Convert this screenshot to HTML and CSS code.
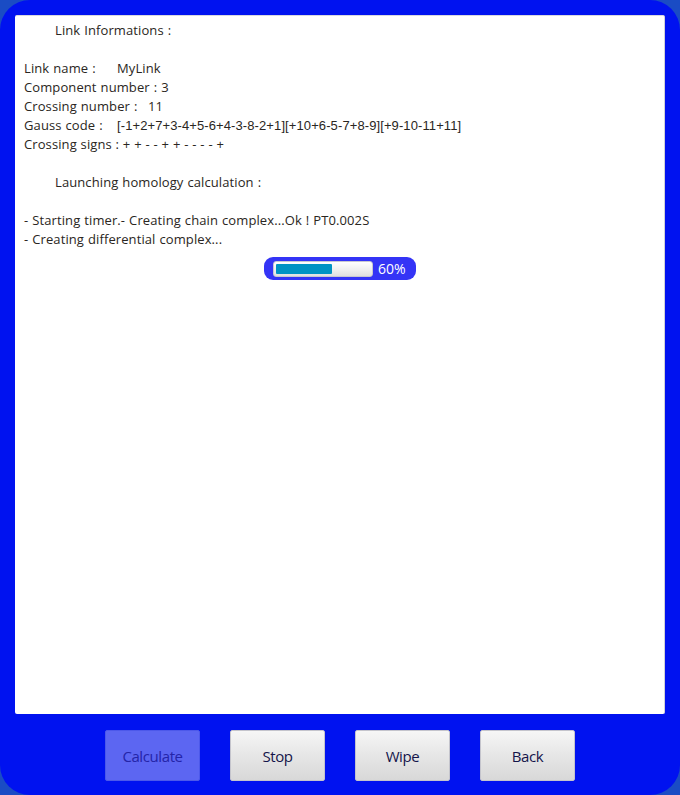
FILE: index.html
```html
<!DOCTYPE html>
<html>
<head>
<meta charset="utf-8">
<link rel="stylesheet" href="styles.css">
</head>
<body>
<div class="window">
  <div class="panel">
    <div class="line indent">Link Informations :</div>
    <div class="line"></div>
    <div class="line"><span class="lbl w93">Link name :</span>MyLink</div>
    <div class="line">Component number : 3</div>
    <div class="line"><span class="lbl w124">Crossing number :</span>11</div>
    <div class="line"><span class="lbl w93">Gauss code :</span><span class="code">[-1+2+7+3-4+5-6+4-3-8-2+1][+10+6-5-7+8-9][+9-10-11+11]</span></div>
    <div class="line signs">Crossing signs : + + - - + + - - - - +</div>
    <div class="line"></div>
    <div class="line indent">Launching homology calculation :</div>
    <div class="line"></div>
    <div class="line">- Starting timer.- Creating chain complex...Ok ! PT0.002S</div>
    <div class="line">- Creating differential complex...</div>
    <div class="progress-row">
      <div class="progress">
        <div class="track"><div class="fill" style="width:60%"></div></div>
        <span class="pct">60%</span>
      </div>
    </div>
  </div>
  <div class="buttons">
    <button class="btn disabled">Calculate</button>
    <button class="btn">Stop</button>
    <button class="btn">Wipe</button>
    <button class="btn">Back</button>
  </div>
</div>
</body>
</html>
```
FILE: styles.css
```css
html, body {
  margin: 0;
  padding: 0;
  width: 680px;
  height: 795px;
  background: #1a4cc4;
  overflow: hidden;
}
.window {
  width: 680px;
  height: 795px;
  box-sizing: border-box;
  background: #0012f0;
  border-radius: 30px;
  padding: 15px 15px 0 15px;
  display: flex;
  flex-direction: column;
}
.panel {
  height: 699px;
  box-sizing: border-box;
  background: #ffffff;
  border-top: 1px solid #d8d8e0;
  border-right: 1px solid #d0d0d8;
  border-radius: 2px;
  padding: 5px 9px 0 9px;
  font-family: "Open Sans", "DejaVu Sans", sans-serif;
  font-size: 13px;
  letter-spacing: 0.1px;
  word-spacing: 0.5px;
  color: #2a2622;
}
.line {
  height: 19px;
  line-height: 19px;
  white-space: nowrap;
}
.signs {
  word-spacing: 0.3px;
}
.indent {
  padding-left: 31px;
}
.lbl {
  display: inline-block;
}
.w93 { width: 93px; }
.w124 { width: 124px; }
.code {
  font-family: "Liberation Sans", sans-serif;
  font-size: 13px;
  letter-spacing: 0.1px;
}
.progress-row {
  display: flex;
  justify-content: center;
  padding-top: 8px;
}
.progress {
  width: 152px;
  height: 23px;
  box-sizing: border-box;
  background: #3434f6;
  border-radius: 9px;
  display: flex;
  align-items: center;
  padding-left: 9px;
  gap: 5px;
  margin-left: 1px;
  letter-spacing: 0;
  word-spacing: 0;
}
.track {
  width: 100px;
  height: 16px;
  box-sizing: border-box;
  background: linear-gradient(#ffffff, #eeeeee 60%, #e0e0e0);
  border: 1px solid #c8c8d0;
  border-radius: 3px;
  padding: 2px;
  display: flex;
}
.fill {
  height: 100%;
  background: #0093c4;
  border-radius: 1px;
}
.pct {
  color: #ffffff;
  font-family: "Open Sans", sans-serif;
  font-size: 14px;
}
.buttons {
  flex: 1;
  display: flex;
  justify-content: center;
  gap: 30px;
  padding-top: 16px;
  margin-left: -15px;
  margin-right: -15px;
}
.btn {
  width: 95px;
  height: 51px;
  box-sizing: border-box;
  border: 1px solid #c4c4cc;
  border-radius: 2px;
  background: linear-gradient(#f6f6f6, #e6e6e6 50%, #d8d8d8);
  font-family: "Open Sans", sans-serif;
  font-size: 15px;
  letter-spacing: -0.4px;
  color: #14144a;
  padding: 0;
}
.btn.disabled {
  background: #5c66f2;
  border-color: #4c58ea;
  color: #2424a8;
}
```
